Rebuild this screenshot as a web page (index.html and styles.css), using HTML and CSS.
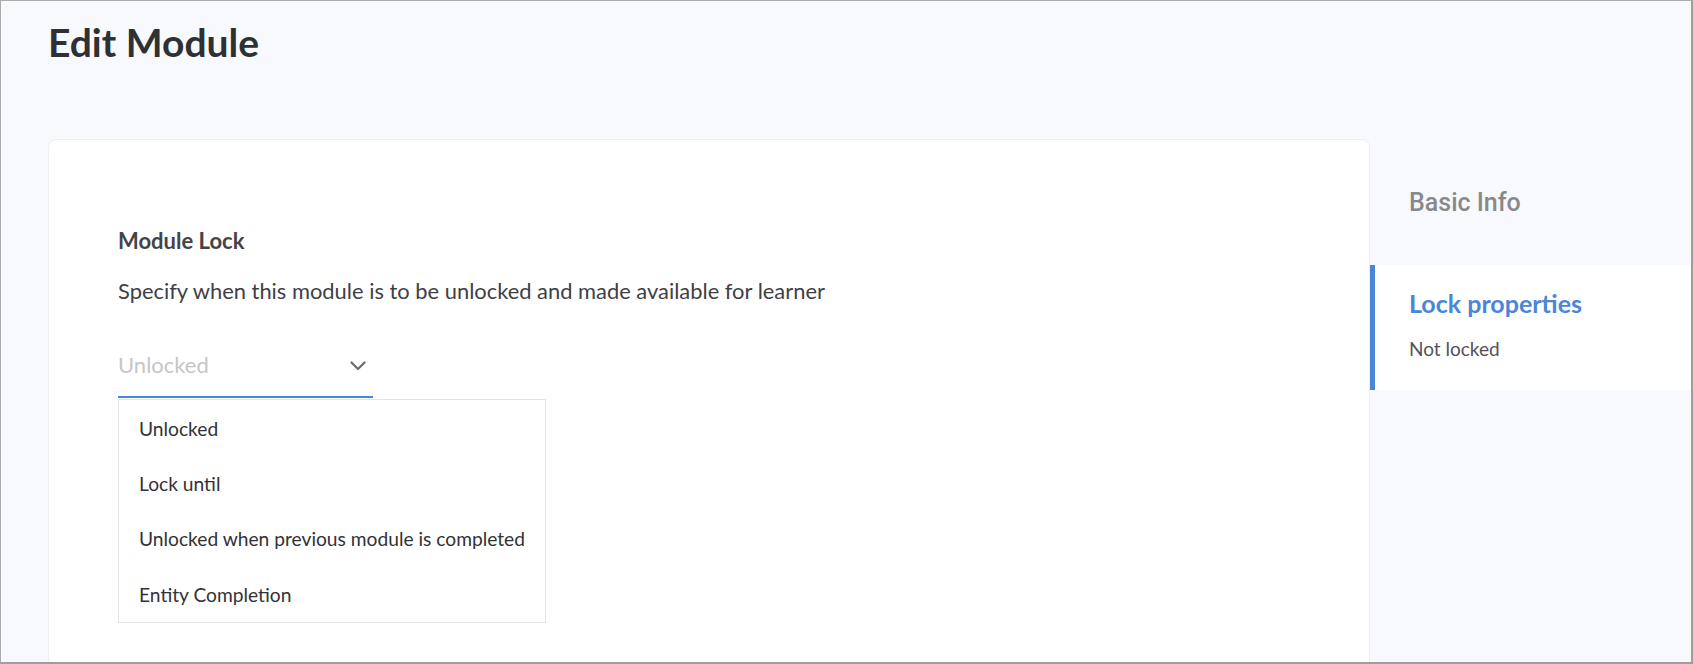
FILE: index.html
```html
<!DOCTYPE html>
<html lang="en">
<head>
<meta charset="utf-8">
<title>Edit Module</title>
<link rel="stylesheet" href="styles.css">
</head>
<body>
<div class="frame">
  <h1 class="page-title">Edit Module</h1>
  <div class="layout">
    <section class="card">
      <h2 class="section-title">Module Lock</h2>
      <p class="section-desc">Specify when this module is to be unlocked and made available for learner</p>
      <div class="select">
        <div class="select-field">
          <span class="select-placeholder">Unlocked</span>
          <svg class="chevron" width="16" height="10" viewBox="0 0 16 10" aria-hidden="true"><path d="M1.5 1.5 L8 8 L14.5 1.5" fill="none" stroke="#6b6b6b" stroke-width="2.2" stroke-linecap="round" stroke-linejoin="round"/></svg>
        </div>
        <ul class="select-menu">
          <li class="select-option">Unlocked</li>
          <li class="select-option">Lock until</li>
          <li class="select-option">Unlocked when previous module is completed</li>
          <li class="select-option">Entity Completion</li>
        </ul>
      </div>
    </section>
    <aside class="sidebar">
      <div class="nav-item">
        <div class="nav-title nav-title-muted">Basic Info</div>
      </div>
      <div class="nav-item nav-item-active">
        <div class="nav-title nav-title-active">Lock properties</div>
        <div class="nav-sub">Not locked</div>
      </div>
    </aside>
  </div>
</div>
</body>
</html>
```

FILE: styles.css
```css
* { box-sizing: border-box; }
html, body { margin: 0; padding: 0; }
body {
  font-family: Lato, "Noto Sans", sans-serif;
  background: #ffffff;
}
.frame {
  width: 1693px;
  height: 664px;
  overflow: hidden;
  background: #f8f9fc;
  border-top: 1px solid #ababab;
  border-left: 1px solid #ababab;
  border-right: 2px solid #9e9e9e;
  border-bottom: 2px solid #9e9e9e;
  padding: 18px 0 0 47px;
}
.page-title {
  margin: 0;
  font-size: 39px;
  line-height: 46px;
  font-weight: 700;
  color: #2f3034;
}
.layout {
  display: flex;
  margin-top: 74px;
  align-items: flex-start;
}
.card {
  width: 1322px;
  flex: none;
  height: 560px;
  background: #ffffff;
  border: 1px solid #eceef3;
  border-radius: 8px 8px 0 0;
  padding: 87.5px 0 0 69px;
}
.section-title {
  margin: 0;
  font-size: 22px;
  line-height: 26px;
  font-weight: 700;
  color: #434447;
}
.section-desc {
  margin: 24px 0 0;
  font-size: 21.9px;
  line-height: 26px;
  color: #3f4043;
}
.select {
  margin-top: 48px;
}
.select-field {
  width: 255px;
  display: flex;
  align-items: center;
  justify-content: space-between;
  padding: 0 7px 18px 0;
  border-bottom: 2px solid #4a86d8;
}
.select-placeholder {
  font-size: 22px;
  line-height: 26px;
  color: #c6c6c8;
}
.chevron { display: block; margin-top: 2px; }
.select-menu {
  list-style: none;
  margin: 1px 0 0;
  padding: 1px 0 0;
  width: 428px;
  border: 1px solid #e4e4e6;
  background: #ffffff;
}
.select-option {
  font-size: 19.2px;
  line-height: 55.4px;
  padding-left: 20px;
  color: #313236;
}
.sidebar {
  flex: 1;
  padding-top: 50px;
}
.nav-title-muted {
  padding-left: 39px;
  font-family: Roboto, "Liberation Sans", sans-serif;
  font-weight: 500;
  font-size: 25px;
  line-height: 28px;
  color: #88898c;
}
.nav-item-active {
  margin-top: 48px;
  background: #ffffff;
  border-left: 5px solid #4a86d8;
  padding: 23px 0 0 34px;
  height: 125px;
}
.nav-title-active {
  font-size: 25px;
  line-height: 30px;
  font-weight: 700;
  color: #4a86d8;
}
.nav-sub {
  margin-top: 20px;
  font-size: 19px;
  line-height: 22px;
  color: #525356;
}
```
